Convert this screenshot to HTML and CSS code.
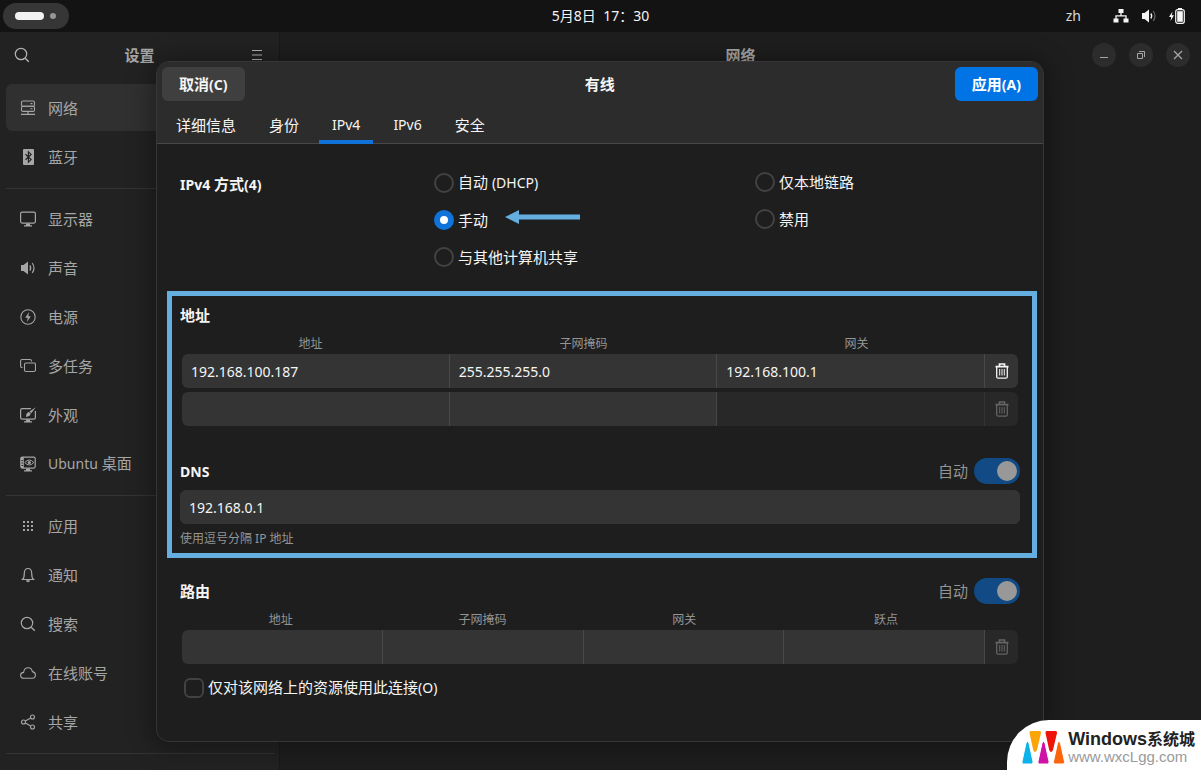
FILE: index.html
```html
<!DOCTYPE html>
<html lang="zh-CN">
<head>
<meta charset="utf-8">
<meta name="viewport" content="width=device-width, initial-scale=1">
<title>设置 - 网络</title>
<link rel="stylesheet" href="styles.css">
</head>
<body>
<svg class="defs" aria-hidden="true">
  <symbol id="trash" viewBox="0 0 16 16">
    <path d="M5.500 2.800V1h5v1.800M1.500 3.700h13" fill="none" stroke="currentColor" stroke-width="1.700"/>
    <path d="M2.700 4v9.700q0 1.500 1.500 1.500h7.600q1.500 0 1.500-1.500V4" fill="none" stroke="currentColor" stroke-width="1.300"/>
    <path d="M5.700 6v6.500M8 6v6.500M10.300 6v6.500" fill="none" stroke="currentColor"/>
  </symbol>
  <symbol id="search" viewBox="0 0 16 16">
    <circle cx="7" cy="7" r="5.700" fill="none" stroke="currentColor" stroke-width="1.200"/>
    <path d="M11.200 11.200l3.600 3.600" stroke="currentColor" stroke-width="1.400"/>
  </symbol>
  <symbol id="speaker" viewBox="0 0 16 16">
    <path d="M1 5h2.500L8 1.500v13L3.500 11H1z" fill="currentColor"/>
    <path d="M9.800 5.500q1.800 2.500 0 5" fill="none" stroke="currentColor" stroke-width="1.300"/>
    <path d="M12.200 3q3.600 5 0 10" fill="none" stroke="currentColor" stroke-width="1.200"/>
  </symbol>
</svg>

<header class="topbar">
  <div class="topbar-side">
    <button class="workspaces" aria-label="活动"><span class="pill"></span><span class="dot"></span></button>
  </div>
  <time class="clock">5月8日&nbsp; 17：30</time>
  <div class="topbar-side status">
    <span class="latin lang">zh</span>
    <svg class="icon" viewBox="0 0 16 16" fill="currentColor"><path d="M5.500 1h5v4h-5zM.5 10.500h5v4h-5zM10.500 10.500h5v4h-5z"/><path d="M8 5v2.800M3 11V7.800h10V11" fill="none" stroke="currentColor" stroke-width="1.300"/></svg>
    <svg class="icon" viewBox="0 0 16 16"><path d="M1 5h2.500L8 1.500v13L3.500 11H1z" fill="currentColor"/><path d="M9.800 5.500q1.800 2.500 0 5" fill="none" stroke="currentColor" stroke-width="1.300"/><path d="M12.200 3q3.600 5 0 10" fill="none" stroke="#666" stroke-width="1.200"/></svg>
    <svg class="icon" viewBox="0 0 16 16" fill="currentColor"><path d="M3.500 3.500L0 9h2.200L1.500 13 5 7.300H2.800z"/><path d="M9 0h4v1.500H9z"/><rect x="6.700" y="1.700" width="8.600" height="13.600" rx="2" fill="none" stroke="currentColor" stroke-width="1.200"/><rect x="8.200" y="3.200" width="5.600" height="10.600"/></svg>
  </div>
</header>

<main class="window">
  <aside class="sidebar">
    <header class="sidebar-head">
      <button class="flat" aria-label="搜索"><svg class="icon" viewBox="0 0 16 16"><use href="#search"/></svg></button>
      <h1 class="title">设置</h1>
      <button class="flat" aria-label="菜单"><svg class="icon" viewBox="0 0 16 16"><path d="M3 3.500h10M3 8h10M3 12.500h10" stroke="currentColor" stroke-width="1.100"/></svg></button>
    </header>
    <nav class="nav">
      <a class="nav-item active" href="#network"><svg class="icon" viewBox="0 0 16 16" fill="none" stroke="currentColor" stroke-width="1.100"><rect x="1.500" y="1" width="13" height="5.200" rx="1.500"/><rect x="1.500" y="6.200" width="13" height="5.200" rx="1.500"/><path d="M1 14.400h14M8 11.500v3M10.500 3.600h2M10.500 8.800h2"/></svg>网络</a>
      <a class="nav-item" href="#bluetooth"><svg class="icon" viewBox="0 0 16 16"><rect x="3" width="11" height="16" rx="1" fill="currentColor"/><path d="M5.500 5.200l5.600 5.400-2.700 2.600V2.800l2.700 2.600-5.600 5.400" fill="none" stroke="#222" stroke-width="1.200"/></svg>蓝牙</a>
      <hr class="nav-rule">
      <a class="nav-item" href="#display"><svg class="icon" viewBox="0 0 16 16"><rect x=".6" y="1.100" width="14.800" height="11" rx="1.500" fill="none" stroke="currentColor" stroke-width="1.200"/><path d="M6 12.500h4v1.700h2v1.200H4v-1.200h2z" fill="currentColor"/></svg>显示器</a>
      <a class="nav-item" href="#sound"><svg class="icon" viewBox="0 0 16 16"><use href="#speaker"/></svg>声音</a>
      <a class="nav-item" href="#power"><svg class="icon" viewBox="0 0 16 16"><circle cx="8" cy="8" r="7.200" fill="none" stroke="currentColor" stroke-width="1.100"/><path d="M9 3L5.200 8.800h2.500L7 13l3.800-5.800H8.300z" fill="currentColor"/></svg>电源</a>
      <a class="nav-item" href="#multitasking"><svg class="icon" viewBox="0 0 16 16" fill="none" stroke="currentColor" stroke-width="1.100"><rect x="4.500" y="5" width="11" height="8.500" rx="1.500"/><path d="M2.500 9.500H2Q.6 9.500.6 8V3Q.6 1.500 2 1.500h8q1.500 0 1.500 1.500v.6"/></svg>多任务</a>
      <a class="nav-item" href="#appearance"><svg class="icon" viewBox="0 0 16 16"><path d="M11 1.600H2.200Q.6 1.600.6 3.200v7.300q0 1.600 1.600 1.600h11.600q1.600 0 1.600-1.600V4" fill="none" stroke="currentColor" stroke-width="1.200"/><path d="M6 12.500h4v1.700h2v1.200H4v-1.200h2zM15.800.2L9.500 4.500l1.800 1.800zM9 5q-3 .4-3 5 4-.4 4.800-3.200z" fill="currentColor"/></svg>外观</a>
      <a class="nav-item" href="#ubuntu"><svg class="icon" viewBox="0 0 16 16"><rect x=".8" y="1.100" width="14.400" height="11" rx="1.500" fill="none" stroke="currentColor" stroke-width="1.200"/><path d="M1 1h2.800v11H1zM6 12.500h4v1.700h2v1.200H4v-1.200h2z" fill="currentColor"/><path d="M4.800 6.500q4.500-5 9 0-4.500 5-9 0z" fill="none" stroke="currentColor"/><circle cx="9.300" cy="6.500" r="1.600" fill="currentColor"/><path d="M1.500 4.500h1.500M1.500 7h1.500M1.500 9.500h1.500" stroke="#222"/></svg><span><span class="latin">Ubuntu</span> 桌面</span></a>
      <hr class="nav-rule">
      <a class="nav-item" href="#apps"><svg class="icon" viewBox="0 0 16 16" fill="currentColor"><path d="M3 3h2v2H3zM7 3h2v2H7zM11 3h2v2h-2zM3 7h2v2H3zM7 7h2v2H7zM11 7h2v2h-2zM3 11h2v2H3zM7 11h2v2H7zM11 11h2v2h-2z"/></svg>应用</a>
      <a class="nav-item" href="#notifications"><svg class="icon" viewBox="0 0 16 16"><path d="M2.500 12.500q1.800-1.500 1.800-6Q4.300 1.500 8 1.500t3.700 5q0 4.500 1.800 6z" fill="none" stroke="currentColor" stroke-width="1.200"/><path d="M6 13.300h4q-.3 2-2 2t-2-2z" fill="currentColor"/></svg>通知</a>
      <a class="nav-item" href="#search-settings"><svg class="icon" viewBox="0 0 16 16"><use href="#search"/></svg>搜索</a>
      <a class="nav-item" href="#accounts"><svg class="icon" viewBox="0 0 16 16"><path d="M4 13.300q-3.400 0-3.400-3Q.6 7.600 3.600 7.400 4.200 2.700 8.300 2.700q3.300 0 4.100 3.900 3 .5 3 3.500 0 3.200-3 3.200z" fill="none" stroke="currentColor" stroke-width="1.100"/></svg>在线账号</a>
      <a class="nav-item" href="#sharing"><svg class="icon" viewBox="0 0 16 16" fill="none" stroke="currentColor" stroke-width="1.100"><circle cx="3.500" cy="8" r="2"/><circle cx="12.500" cy="3" r="2"/><circle cx="12.500" cy="13" r="2"/><path d="M5.300 7l5.400-3M5.300 9l5.400 3"/></svg>共享</a>
      <hr class="nav-rule">
    </nav>
  </aside>
  <section class="content">
    <header class="content-head">
      <span class="window-spacer"></span>
      <h2 class="title">网络</h2>
      <div class="window-buttons">
        <button class="round" aria-label="最小化"><svg viewBox="0 0 10 10"><path d="M1 7.500h8" stroke="currentColor"/></svg></button>
        <button class="round" aria-label="还原"><svg viewBox="0 0 10 10" fill="none" stroke="currentColor"><path d="M1.500 3.500h5v5h-5zM3 1.500h5.500V7"/></svg></button>
        <button class="round" aria-label="关闭"><svg viewBox="0 0 10 10"><path d="M1 1l8 8M9 1L1 9" stroke="currentColor" stroke-width="1.300"/></svg></button>
      </div>
    </header>
  </section>
</main>

<div class="overlay">
  <form class="dialog" role="dialog" aria-labelledby="dialog-title">
    <header class="dialog-head">
      <div class="dialog-bar">
        <button class="btn" type="button">取消<span class="latin">(C)</span></button>
        <h2 class="dialog-title" id="dialog-title">有线</h2>
        <button class="btn primary" type="button">应用<span class="latin">(A)</span></button>
      </div>
      <div class="tabs" role="tablist">
        <button class="tab" type="button" role="tab">详细信息</button>
        <button class="tab" type="button" role="tab">身份</button>
        <button class="tab selected" type="button" role="tab" aria-selected="true"><span class="latin">IPv4</span></button>
        <button class="tab" type="button" role="tab"><span class="latin">IPv6</span></button>
        <button class="tab" type="button" role="tab">安全</button>
      </div>
    </header>
    <div class="dialog-body">
      <div class="methods" role="radiogroup" aria-labelledby="method-title">
        <h3 class="heading" id="method-title"><span class="latin">IPv4</span> 方式<span class="latin">(4)</span></h3>
        <div class="options">
          <label class="option"><input class="radio" type="radio" name="method"><span>自动 <span class="latin">(DHCP)</span></span></label>
          <div class="option-line">
            <label class="option"><input class="radio" type="radio" name="method" checked><span>手动</span></label>
            <svg class="arrow" viewBox="0 0 75 14" aria-hidden="true"><path d="M0 7L14 0v4.500h61v5H14V14z" fill="#64aee0"/></svg>
          </div>
          <label class="option"><input class="radio" type="radio" name="method"><span>与其他计算机共享</span></label>
        </div>
        <div class="options">
          <label class="option"><input class="radio" type="radio" name="method"><span>仅本地链路</span></label>
          <label class="option"><input class="radio" type="radio" name="method"><span>禁用</span></label>
        </div>
      </div>

      <section class="highlight">
        <h3 class="heading">地址</h3>
        <div class="columns wide"><span id="a1">地址</span><span id="a2">子网掩码</span><span id="a3">网关</span></div>
        <div class="entries">
          <div class="entry-row">
            <input class="entry" type="text" value="192.168.100.187" aria-labelledby="a1">
            <input class="entry" type="text" value="255.255.255.0" aria-labelledby="a2">
            <input class="entry" type="text" value="192.168.100.1" aria-labelledby="a3">
            <button class="delete" type="button" aria-label="删除"><svg class="icon" viewBox="0 0 16 16"><use href="#trash"/></svg></button>
          </div>
          <div class="entry-row">
            <input class="entry" type="text" aria-labelledby="a1">
            <input class="entry" type="text" aria-labelledby="a2">
            <input class="entry" type="text" aria-labelledby="a3" disabled>
            <button class="delete" type="button" aria-label="删除" disabled><svg class="icon" viewBox="0 0 16 16"><use href="#trash"/></svg></button>
          </div>
        </div>
        <div class="section-bar">
          <h3 class="heading"><label class="latin" for="dns">DNS</label></h3>
          <label class="auto">自动<input class="switch" type="checkbox" role="switch" checked></label>
        </div>
        <input class="entry dns" id="dns" type="text" value="192.168.0.1">
        <p class="hint">使用逗号分隔 IP 地址</p>
      </section>

      <section class="routes">
        <div class="section-bar">
          <h3 class="heading">路由</h3>
          <label class="auto">自动<input class="switch" type="checkbox" role="switch" checked></label>
        </div>
        <div class="columns"><span id="r1">地址</span><span id="r2">子网掩码</span><span id="r3">网关</span><span id="r4">跃点</span></div>
        <div class="entries">
          <div class="entry-row">
            <input class="entry" type="text" aria-labelledby="r1">
            <input class="entry" type="text" aria-labelledby="r2">
            <input class="entry" type="text" aria-labelledby="r3">
            <input class="entry" type="text" aria-labelledby="r4">
            <button class="delete" type="button" aria-label="删除" disabled><svg class="icon" viewBox="0 0 16 16"><use href="#trash"/></svg></button>
          </div>
        </div>
        <label class="option only"><input class="check" type="checkbox"><span>仅对该网络上的资源使用此连接<span class="latin">(O)</span></span></label>
      </section>
    </div>
  </form>
</div>

<aside class="watermark">
  <svg class="logo" viewBox="0 0 43 33" aria-hidden="true">
    <path d="M7.500 2Q7 0 9 0h8.500q2 0 1.500 2l-4 17q-2 4-3.800 0z" fill="#fba50a"/>
    <path d="M23.500 2Q23 0 25 0h8.500q2 0 1.500 2l-4 17q-2 4-3.800 0z" fill="#ee1409"/>
    <g stroke="#fff" stroke-width="1">
      <path d="M4 12q1.500-3 3 0l4 18.500q.3 2.500-1.500 2.500h-8Q-.5 33 0 30.500z" fill="#0cb2ea"/>
      <path d="M20 12q1.500-3 3 0l4 18.500q.3 2.500-1.500 2.500h-8q-2 0-1.500-2.500z" fill="#d011a5"/>
      <path d="M35.500 12q1.500-3 3 0l4 18.500q.3 2.500-1.500 2.500h-8q-2 0-1.500-2.500z" fill="#fb650b"/>
    </g>
  </svg>
  <div class="brand">
    <strong class="brand-name">Windows<span class="brand-cjk">系统城</span></strong>
    <span class="brand-url">www.wxcLgg.com</span>
  </div>
</aside>
</body>
</html>
```
FILE: styles.css
```css
* {
  box-sizing: border-box;
}

body {
  margin: 0;
  height: 100vh;
  display: flex;
  flex-direction: column;
  overflow: hidden;
  background: #1e1e1e;
  color: #f5f5f5;
  font: 15px/20px "Noto Sans", "Noto Sans CJK SC", sans-serif;
}

h1, h2, h3, p {
  margin: 0;
  font-size: 15px;
}

button, input {
  font: inherit;
  color: inherit;
  margin: 0;
}

button {
  border: 0;
  padding: 0;
  background: none;
}

.defs {
  display: none;
}

.latin {
  font-size: 14px;
}

.icon {
  width: 16px;
  height: 16px;
  flex: none;
  display: block;
}

/* Top bar */
.topbar {
  flex: none;
  height: 32px;
  display: flex;
  align-items: center;
  background: #131313;
}

.topbar-side {
  flex: 1;
  display: flex;
  align-items: center;
  padding: 0 16px 0 3px;
}

.clock {
  font-size: 14px;
}

.workspaces {
  display: flex;
  align-items: center;
  gap: 6px;
  height: 26px;
  padding: 0 13px 0 12px;
  border-radius: 13px;
  background: #363636;
}

.pill {
  width: 29px;
  height: 8px;
  border-radius: 4px;
  background: #f2f2f2;
}

.dot {
  width: 6px;
  height: 6px;
  border-radius: 3px;
  background: #969696;
}

.status {
  justify-content: flex-end;
  gap: 12px;
}

.lang {
  margin-right: 20px;
  color: #d8d8d8;
}

/* Settings window */
.window {
  flex: 1;
  min-height: 0;
  display: flex;
  color: #a6a6a6;
}

.sidebar {
  flex: none;
  width: 280px;
  background: #222;
  border-right: 1px solid #191919;
}

.sidebar-head {
  display: flex;
  align-items: center;
  justify-content: space-between;
  height: 46px;
  padding: 0 14px;
}

.flat {
  color: #b4b4b4;
}

.title {
  font-weight: 700;
}

.nav {
  padding: 6px 5px 0 6px;
}

.nav-item {
  display: flex;
  align-items: center;
  gap: 12px;
  height: 47px;
  margin-bottom: 2px;
  padding-left: 14px;
  border-radius: 6px;
  color: inherit;
  text-decoration: none;
}

.active {
  background: #303030;
}

.nav-rule {
  height: 1px;
  margin: 8px 0 6px;
  border: 0;
  background: #343434;
}

.content {
  flex: 1;
}

.content-head {
  display: flex;
  align-items: center;
  justify-content: space-between;
  height: 46px;
  padding-right: 11px;
}

.window-spacer {
  width: 109px;
}

.window-buttons {
  display: flex;
  justify-content: space-between;
  width: 98px;
}

.round {
  display: flex;
  align-items: center;
  justify-content: center;
  width: 24px;
  height: 24px;
  border-radius: 12px;
  background: #2c2c2c;
}

.round svg {
  width: 10px;
  height: 10px;
}

/* Connection dialog */
.overlay {
  position: absolute;
  inset: 0;
  display: flex;
  justify-content: center;
  align-items: flex-start;
  padding: 61px 25px 0 24px;
}

.dialog {
  width: 100%;
  max-width: 888px;
  border: 1px solid #363636;
  border-radius: 13px;
  background: #1e1e1e;
  box-shadow: 0 2px 24px 4px rgba(0, 0, 0, 0.35);
}

.dialog-head {
  background: #2c2c2c;
  border-bottom: 1px solid #484848;
  border-radius: 12px 12px 0 0;
}

.dialog-bar {
  display: flex;
  align-items: center;
  justify-content: space-between;
  padding: 5px;
}

.btn {
  height: 34px;
  padding: 0 17px;
  border-radius: 6px;
  background: #3f3f3f;
  font-weight: 700;
}

.primary {
  background: #0073e5;
  color: #fff;
}

.tabs {
  display: flex;
  gap: 7px;
  padding-left: 6px;
}

.tab {
  height: 38px;
  margin-bottom: -1px;
  padding: 3px 13px 0;
  border-bottom: 4px solid transparent;
}

.selected {
  border-bottom-color: #0f73da;
}

.dialog-body {
  padding: 28px 23px 43px;
}

.methods {
  display: grid;
  grid-template-columns: 254fr 321fr 265fr;
}

.methods .heading {
  padding-top: 2px;
}

.options {
  display: flex;
  flex-direction: column;
  gap: 17px;
}

.option {
  display: flex;
  align-items: center;
  gap: 4px;
}

.option-line {
  display: flex;
  align-items: flex-start;
  gap: 17px;
}

.arrow {
  width: 75px;
  height: 14px;
}

.radio,
.check {
  appearance: none;
  flex: none;
  width: 20px;
  height: 20px;
  border: 2px solid #424242;
  border-radius: 10px;
}

.radio:checked {
  border: 6px solid #0f73da;
  background: #fff;
}

.check {
  border-radius: 6px;
}

.highlight {
  margin: 24px -17px 20px -13px;
  padding: 9px 12px 4px 8px;
  border: 5px solid #64aee0;
}

.columns {
  display: flex;
  margin: 8px 33px 0 0;
  color: #949494;
  font-size: 12px;
  text-align: center;
}

.wide {
  margin: 9px 27px 0 -6px;
}

.columns span {
  flex: 1;
}

.entries {
  display: flex;
  flex-direction: column;
  gap: 4px;
  padding: 0 2px;
}

.entry-row {
  display: flex;
  border-radius: 6px;
  overflow: hidden;
}

.entry {
  flex: 1;
  min-width: 0;
  height: 34px;
  padding: 0 9px;
  border: 0;
  background: #343434;
  font-size: 14px;
}

.entry-row .entry {
  border-right: 1px solid #484848;
}

.entry-row .entry:disabled {
  background: #282828;
  border-right-color: #333;
}

.delete {
  display: flex;
  align-items: center;
  justify-content: center;
  width: 33px;
  background: #343434;
}

.delete:disabled {
  background: #282828;
  color: #646464;
}

.section-bar {
  display: flex;
  align-items: center;
  justify-content: space-between;
}

.highlight .section-bar {
  margin: 32px 0 6px;
}

.auto {
  display: flex;
  align-items: center;
  gap: 6px;
  color: #949494;
}

.switch {
  appearance: none;
  display: flex;
  justify-content: flex-end;
  width: 46px;
  height: 26px;
  padding: 3px;
  border-radius: 13px;
  background: #114a84;
}

.switch::before {
  content: "";
  width: 20px;
  height: 20px;
  border-radius: 10px;
  background: #989898;
}

.dns {
  display: block;
  width: 100%;
  border-radius: 6px;
}

.hint {
  margin-top: 5px;
  color: #949494;
  font-size: 12px;
}

.routes .columns {
  margin-top: 6px;
}

.only {
  margin: 13px 0 0 4px;
}

/* Corner badge */
.watermark {
  position: absolute;
  right: 0;
  bottom: 0;
  display: flex;
  align-items: center;
  gap: 3px;
  height: 50px;
  padding: 4px 6px 0 15px;
  border-radius: 42px 0 0 0;
  background: #fff;
  color: #222;
  font-family: "Liberation Sans", "Noto Sans CJK SC", sans-serif;
}

.logo {
  width: 43px;
  height: 33px;
}

.brand {
  display: flex;
  flex-direction: column;
}

.brand-name {
  font-size: 18px;
  line-height: 18px;
}

.brand-cjk {
  font-size: 16px;
}

.brand-url {
  color: #9a9a9a;
  font-size: 15px;
  line-height: 16px;
}
```
